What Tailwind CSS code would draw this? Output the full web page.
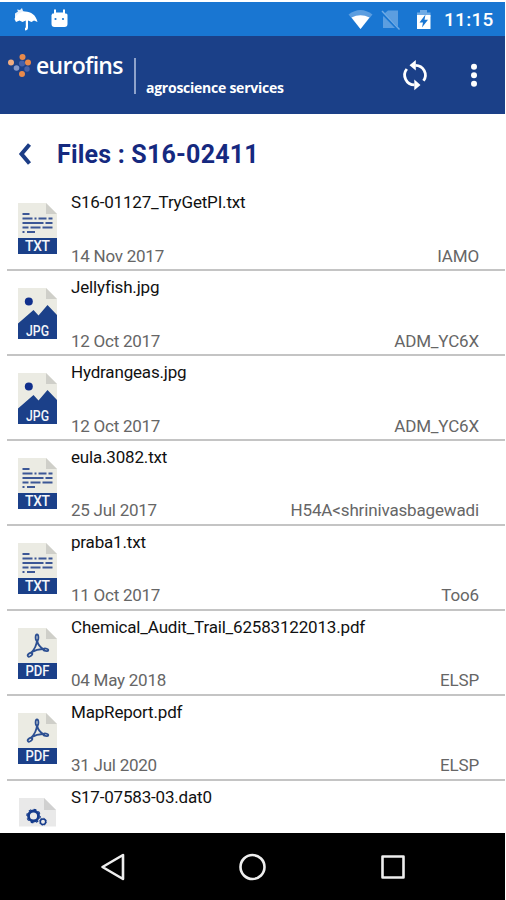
<!DOCTYPE html>
<html lang="en">
<head>
<meta charset="utf-8">
<title>Files</title>
<script src="https://cdn.jsdelivr.net/npm/@tailwindcss/browser@4"></script>
</head>
<body class="bg-white">
<svg class="hidden">
  <symbol id="txt" viewBox="0 0 39 51">
    <path d="M0 0H28L39 11V35H0Z" fill="#ebebe3"/><path d="M28 0L39 11H28Z" fill="#cfcfc9"/>
    <rect y="35" width="39" height="16" fill="#1b4089"/>
    <g stroke="#3c5796" stroke-width="1.800"><path d="M4.500 11h7M4.500 15.500h10M16.500 15.500h2M20.500 15.500h8M30.500 15.500h4M4.500 20h21M27.500 20h7M4.500 24.500h6M12.500 24.500h10M24.500 24.500h10M4.500 29h2M9 29h8"/></g>
    <text x="19.500" y="48" text-anchor="middle" textLength="25" font-family="Roboto, sans-serif" font-size="13.800" font-weight="500" fill="#f4f6fa">TXT</text>
  </symbol>
  <symbol id="jpg" viewBox="0 0 39 51">
    <path d="M0 0H28L39 11V51H0Z" fill="#ebebe3"/><path d="M28 0L39 11H28Z" fill="#cfcfc9"/>
    <circle cx="10.800" cy="13.500" r="4" fill="#102f8c"/>
    <path d="M0 35.500L15.500 22L20.500 27.500L29.500 17L39 27V51H0Z" fill="#1b4089"/>
    <text x="19.500" y="48.200" text-anchor="middle" textLength="23" lengthAdjust="spacingAndGlyphs" font-family="Roboto, sans-serif" font-size="13.800" font-weight="500" fill="#f4f6fa">JPG</text>
  </symbol>
  <symbol id="pdf" viewBox="0 0 39 51">
    <path d="M0 0H28L39 11V35H0Z" fill="#ebebe3"/><path d="M28 0L39 11H28Z" fill="#cfcfc9"/>
    <rect y="35" width="39" height="16" fill="#1b4089"/>
    <g fill="none" stroke="#2c4f92" stroke-width="1.800" stroke-linejoin="round"><path d="M19 12C18.800 17 16 22 12.500 25.500M19 12C19.800 16.500 22 19.500 26 21.500M14 24C18 21.500 22 20.800 27 21.200"/><ellipse cx="19" cy="9.500" rx="1.400" ry="3"/><ellipse cx="12" cy="26.700" rx="2.600" ry="1.500" transform="rotate(-38 12 26.700)"/><ellipse cx="27.800" cy="21.800" rx="2.500" ry="1.200" transform="rotate(10 27.800 21.800)"/></g>
    <text x="19.500" y="48" text-anchor="middle" textLength="24" lengthAdjust="spacingAndGlyphs" font-family="Roboto, sans-serif" font-size="13.800" font-weight="500" fill="#f4f6fa">PDF</text>
  </symbol>
  <symbol id="dat" viewBox="0 0 39 51">
    <path d="M1 0H26L38 12V28.500H1Z" fill="#e9e9e9"/><path d="M26 0L38 12H26Z" fill="#d0d0d0"/>
    <g fill="none" stroke="#153b8c"><circle cx="15.500" cy="18" r="5" stroke-width="2.800"/><circle cx="15.500" cy="18" r="6.700" stroke-width="1.200" stroke-dasharray="2.700 2.560"/><circle cx="25" cy="23.700" r="2.700" stroke-width="1.500"/><circle cx="25" cy="23.700" r="3.600" stroke-width=".6" stroke-dasharray="1.500 1.330"/></g>
  </symbol>
</svg>
<div class="flex h-[900px] w-[505px] flex-col overflow-hidden bg-white pt-[2px] font-['Roboto',sans-serif]">
  <div class="flex h-[34px] shrink-0 items-center bg-[#1976d2]">
    <svg class="h-[34px] w-[100px]" viewBox="0 2 100 34" fill="#fff">
      <path d="M14.500 19C16 15 20 11.800 25 11.500C31 11.500 36 15 37.500 22L34 20.500L31.500 22L28 20.500V27.500Q28 30.500 25 30.500V28Q25.800 28 25.800 27V20.500L22.500 22L19.500 20.500L16 22Z"/><path d="M15 13.500L18 11.500L17 9.500L20 10L22 8L23 11L25 12L20 16L15 18Z" opacity=".9"/>
      <path d="M52.500 13.500H54V9.500H56V12.500H63V9.500H65V13.500H66Q67.500 13.500 67.500 15V24Q67.500 27 64.500 27H54.500Q51.500 27 51.500 24V15Z"/><circle cx="55.500" cy="19" r="1.100" fill="#1976d2"/><circle cx="63" cy="19" r="1.100" fill="#1976d2"/>
    </svg>
    <svg class="ml-auto h-[34px] w-[92px]" viewBox="347 2 92 34">
      <path d="M348.500 14.500Q360.500 5.500 372.500 14.500L360.500 29Z" fill="#5c9ee0"/><path d="M351.500 17.500Q360.500 13 369.500 17.500L360.500 29Z" fill="#fff"/>
      <path d="M385 13L388 10.500H398V28H383V17Z" fill="#5c9ee0"/><path d="M380.500 11L399 30" stroke="#1976d2" stroke-width="3"/><path d="M382 11L399.500 29.500" stroke="#70abe5" stroke-width="1.400"/>
      <path d="M417 12.500H420V10H427V12.500H430.500V17H417Z" fill="#70abe5"/><path d="M417 15H430.500V29H417Z" fill="#fff"/><path d="M425.500 14.500L419.500 22.500H423L422 27.500L428 19.800H424.500Z" fill="#1976d2"/>
    </svg>
    <div class="w-[66px] pl-[5px] text-[19px] leading-[34px] font-medium tracking-[0.300px] text-white"><span class="relative top-px">11:15</span></div>
  </div>
  <header class="flex h-[78px] shrink-0 bg-[#1b4088] text-white">
    <svg class="mt-[16px] ml-[7px] h-[26px] w-[25px] shrink-0" viewBox="7 52 25 26">
      <g fill="#e98a4b"><circle cx="11" cy="62.500" r="3" fill="#f0ac80"/><circle cx="22.500" cy="57" r="3"/><circle cx="28" cy="62.500" r="3"/><circle cx="22" cy="74" r="3"/></g><circle cx="16.500" cy="68" r="2.800" fill="#8497c9"/><circle cx="22" cy="63.500" r="3" fill="#4662aa"/><circle cx="27" cy="69" r="2.700" fill="#4662aa"/>
    </svg>
    <div class="ml-[4px] w-[98px] pt-[12px] font-['Open_Sans',sans-serif] text-[23px] leading-[34px] font-semibold tracking-[-0.700px]"><span>eurofins</span></div>
    <div class="mt-[22px] h-[36px] w-[2px] bg-[#8fa3cb]"></div>
    <div class="ml-[10px] pt-[42px] font-['Open_Sans',sans-serif] text-[14px] leading-[20px] font-bold tracking-[-0.250px]"><span>agroscience services</span></div>
    <svg class="mt-[22px] mr-[41px] ml-auto h-[34px] w-[28px]" viewBox="401 58 28 34" fill="none" stroke="#fff" stroke-width="2.800">
      <path d="M415.500 65.300A9.800 9.800 0 0 1 423.500 80.800M414.500 84.900A9.800 9.800 0 0 1 406.800 69"/><path d="M409.500 65.300L415.800 60V70.500ZM420.500 84.900L414.300 79.500V90.300Z" fill="#fff" stroke="none"/>
    </svg>
    <svg class="mt-[24px] mr-[27px] h-[30px] w-[8px]" viewBox="0 0 8 30" fill="#fff"><circle cx="4" cy="6.700" r="3"/><circle cx="4" cy="15.200" r="3"/><circle cx="4" cy="23.700" r="3"/></svg>
  </header>
  <div class="flex h-[72px] shrink-0 items-start pt-[23px] pl-[17px]">
    <svg class="mt-[6px] h-[22px] w-[15px]" viewBox="0 0 15 22"><path d="M12.500 1.500L4.500 11L12.500 20.500" fill="none" stroke="#1c3d86" stroke-width="4"/></svg>
    <h1 class="ml-[25px] text-[25px] leading-[36px] font-bold tracking-[0.200px] text-[#15297f]">Files : S16-02411</h1>
  </div>
  <main id="list" class="h-[647px] shrink-0 overflow-hidden"></main>
  <nav class="h-[67px] shrink-0 bg-black">
    <svg class="h-[67px] w-full" viewBox="0 833 505 67" fill="none" stroke="#eee" stroke-width="2.600" stroke-linejoin="round"><path d="M102.500 867L123 855V879Z"/><circle cx="252.500" cy="867" r="12"/><rect x="382.500" y="856.500" width="21" height="21"/></svg>
  </nav>
</div>
<script>
const files = [
  ['txt','S16-01127_TryGetPI.txt','14 Nov 2017','IAMO'],
  ['jpg','Jellyfish.jpg','12 Oct 2017','ADM_YC6X'],
  ['jpg','Hydrangeas.jpg','12 Oct 2017','ADM_YC6X'],
  ['txt','eula.3082.txt','25 Jul 2017','H54A&lt;shrinivasbagewadi'],
  ['txt','praba1.txt','11 Oct 2017','Too6'],
  ['pdf','Chemical_Audit_Trail_62583122013.pdf','04 May 2018','ELSP'],
  ['pdf','MapReport.pdf','31 Jul 2020','ELSP'],
  ['dat','S17-07583-03.dat0','','']
];
document.getElementById('list').innerHTML = files.map(([icon, name, date, user]) => `
  <div class="ml-[7px] flex h-[84.950px] border-b-2 border-[#c4c4c4] pl-[11px]">
    <svg class="mt-[17px] h-[51px] w-[39px] shrink-0"><use href="#${icon}"/></svg>
    <div class="ml-[14px] flex flex-1 flex-col justify-between pt-[5px] pr-[26px] pb-[2.300px]">
      <div class="text-[17px] leading-[22px] tracking-[-0.180px] text-[#111]">${name}</div>
      <div class="flex justify-between text-[17px] leading-[22px] text-[#666]"><span class="tracking-[-0.250px]">${date}</span><span class="tracking-[-0.150px]">${user}</span></div>
    </div>
  </div>`).join('');
</script>
</body>
</html>
